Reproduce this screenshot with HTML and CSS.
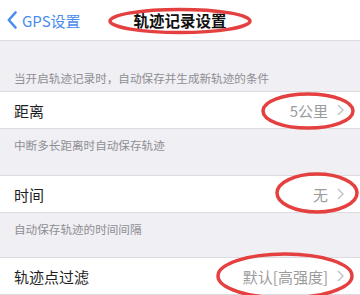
FILE: index.html
```html
<!DOCTYPE html>
<html lang="zh-CN">
<head>
    <meta charset="UTF-8">
    <meta name="viewport" content="width=device-width, initial-scale=1.0">
    <title>轨迹记录设置</title>
    <link rel="stylesheet" href="styles.css">
</head>
<body>
    <div class="page">
        <header class="nav">
            <a class="back" href="#">
                <svg width="10" height="18" viewBox="0 0 10 18"><polyline points="8.5,1.5 1.8,9 8.5,16.5" fill="none" stroke="#4a8cf0" stroke-width="2.6" stroke-linecap="round" stroke-linejoin="round"/></svg>
                <span>GPS设置</span>
            </a>
            <h1 class="title">轨迹记录设置</h1>
            <div></div>
        </header>

        <div class="group-head">当开启轨迹记录时，自动保存并生成新轨迹的条件</div>
        <div class="row">
            <span class="label">距离</span>
            <span class="value">5公里</span>
            <svg class="arrow" width="7" height="12" viewBox="0 0 7 12"><polyline points="1,1 6,6 1,11" fill="none" stroke="#c4c4c8" stroke-width="1.5"/></svg>
        </div>
        <div class="group-foot">中断多长距离时自动保存轨迹</div>

        <div class="row">
            <span class="label">时间</span>
            <span class="value">无</span>
            <svg class="arrow" width="7" height="12" viewBox="0 0 7 12"><polyline points="1,1 6,6 1,11" fill="none" stroke="#c4c4c8" stroke-width="1.5"/></svg>
        </div>
        <div class="group-foot short">自动保存轨迹的时间间隔</div>

        <div class="row">
            <span class="label">轨迹点过滤</span>
            <span class="value">默认[高强度]</span>
            <svg class="arrow" width="7" height="12" viewBox="0 0 7 12"><polyline points="1,1 6,6 1,11" fill="none" stroke="#c4c4c8" stroke-width="1.5"/></svg>
        </div>

        <!-- red marks drawn on top of the screenshot -->
        <svg class="marks" width="360" height="295" viewBox="0 0 360 295">
            <g fill="none" stroke="#e4403f" stroke-width="3.5">
                <ellipse cx="180" cy="21" rx="70" ry="11.5"/>
                <ellipse cx="308" cy="111" rx="45" ry="17"/>
                <ellipse cx="317" cy="193" rx="40" ry="19"/>
                <ellipse cx="285" cy="276" rx="67" ry="22"/>
            </g>
        </svg>
    </div>
</body>
</html>
```

FILE: styles.css
```css
body {
    margin: 0;
    background-color: #efeff4;
    font-family: "Noto Sans CJK SC", "Noto Sans", sans-serif;
}
.page {
    position: relative;
    width: 360px;
    height: 295px;
    overflow: hidden;
}
.nav {
    display: grid;
    grid-template-columns: 1fr auto 1fr;
    align-items: center;
    height: 40px;
    background-color: #fff;
    border-bottom: 1px solid #dcdce0;
}
.back {
    display: flex;
    align-items: center;
    gap: 5px;
    padding-left: 7px;
    color: #4a8cf0;
    text-decoration: none;
    font-size: 15px;
}
.title {
    margin: 0;
    font-size: 15.5px;
    font-weight: bold;
    color: #111;
}
.group-head {
    padding: 29px 14px 5px;
    line-height: 16px;
    font-size: 11.6px;
    color: #8e8e93;
}
.group-foot {
    padding: 8px 14px 22px;
    line-height: 16px;
    font-size: 11.6px;
    color: #8e8e93;
}
.group-foot.short {
    padding-bottom: 20px;
}
.row {
    display: flex;
    align-items: center;
    height: 36px;
    padding: 0 16px 0 14px;
    background-color: #fff;
    border-top: 0.5px solid #dcdce0;
    border-bottom: 0.5px solid #dcdce0;
}
.label {
    flex: 1;
    font-size: 15px;
    color: #1e1e1e;
}
.value {
    font-size: 15px;
    color: #9b9b9b;
    margin-right: 9px;
}
.arrow {
    display: block;
}
.marks {
    position: absolute;
    top: 0;
    left: 0;
    pointer-events: none;
}
```
